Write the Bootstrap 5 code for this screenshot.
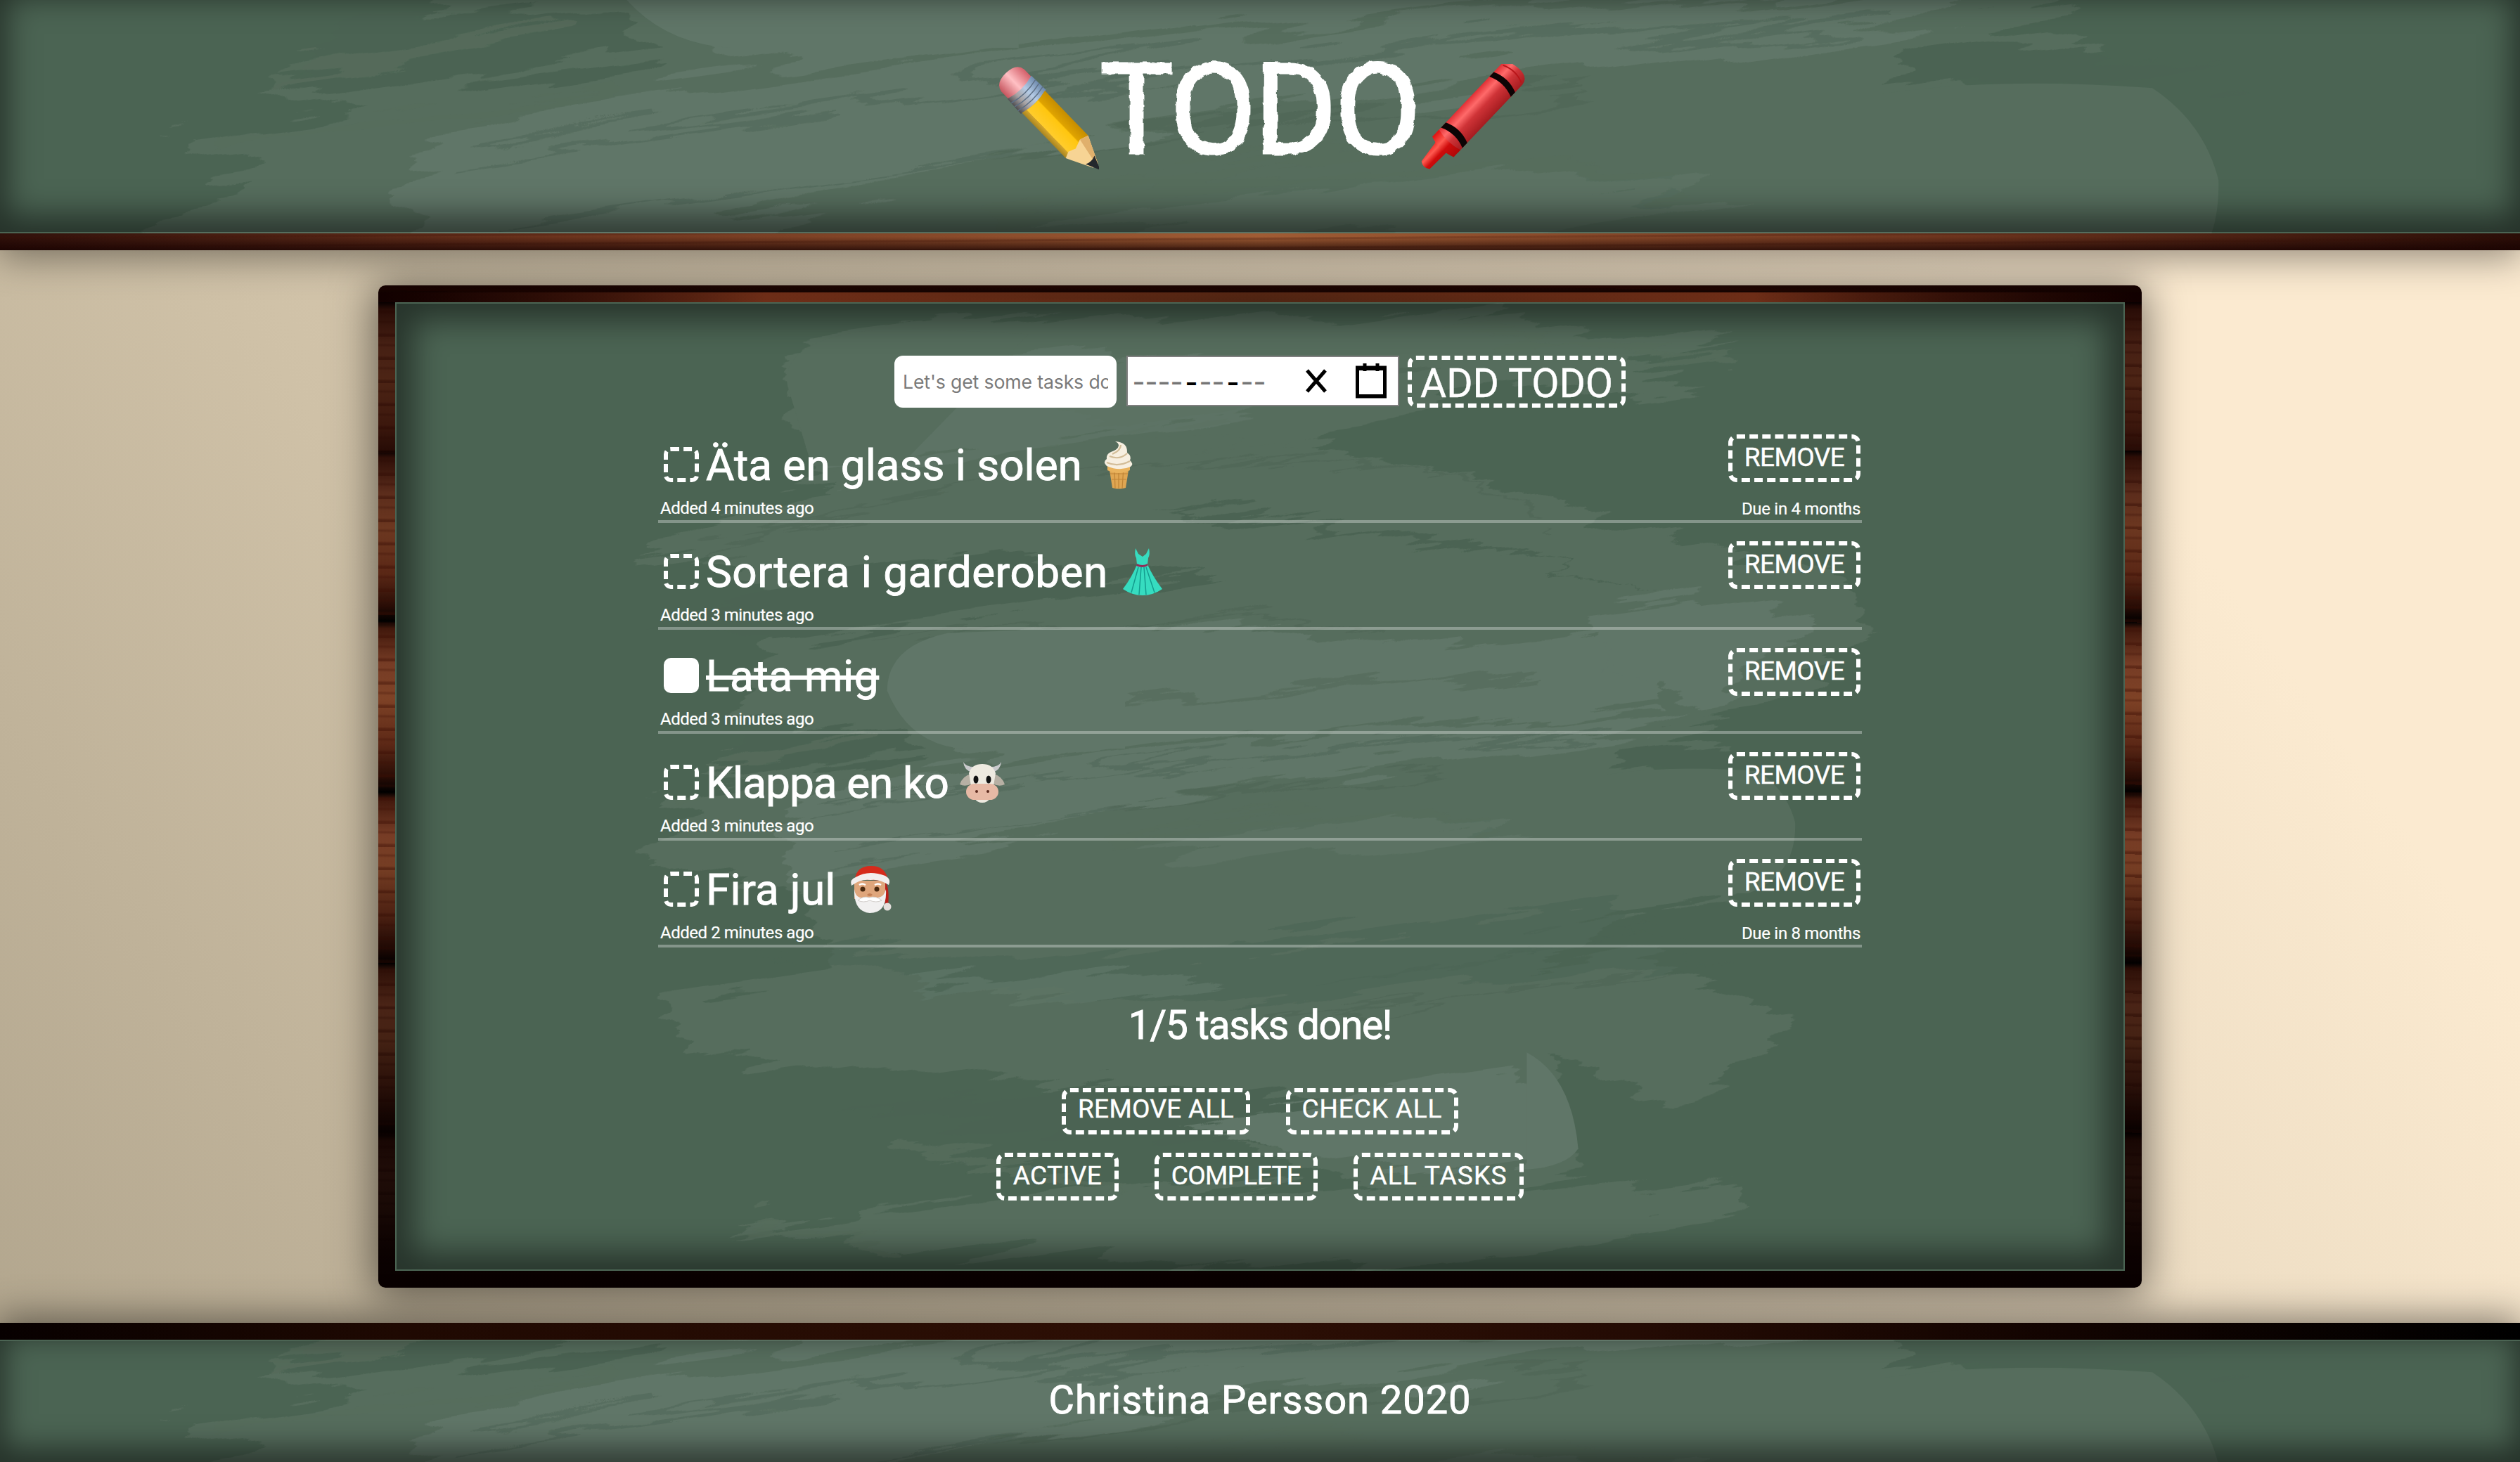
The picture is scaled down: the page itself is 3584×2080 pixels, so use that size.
<!DOCTYPE html>
<html lang="sv">
<head>
<meta charset="utf-8">
<meta name="viewport" content="width=device-width, initial-scale=1">
<title>Todo</title>
<link href="https://cdn.jsdelivr.net/npm/bootstrap@5.3.0/dist/css/bootstrap.min.css" rel="stylesheet">
<style>
  body { font-family: Roboto, "Open Sans", sans-serif; color: #fff; width: 3584px; height: 2080px; overflow: hidden;
    background: linear-gradient(54deg, #b0a48c 0, #cfc1a7 30%, #fbead0 80%); }
  .chalk { -webkit-text-stroke: .9px #fff; stroke-linejoin: round; paint-order: stroke; white-space: nowrap; }
  .board { position: relative; background: #4b6453; overflow: hidden; }
  .board > svg.smear { position: absolute; pointer-events: none; }
  .board > .shade { position: absolute; inset: 2px; pointer-events: none; }
  .board > .front { position: relative; z-index: 2; }

  .top-bar { height: 356px; box-shadow: 0 8px 50px 2px rgba(0,0,0,.42); position: relative; }
  .top-bar .board { height: 332px; }
  .top-bar .smear { left: -1416px; top: -1839px; width: 6417px; height: 3724px; }
  .top-bar .shade { box-shadow: inset 0 -14px 44px 10px rgba(0,0,0,.5); inset: 0 0 2px; }
  .wood-bar { height: 24px; }
  .wood-top { background:
      linear-gradient(rgba(0,0,0,0) 20%, rgba(20,0,0,.72)),
      repeating-linear-gradient(179.6deg, rgba(60,15,5,0) 0 5px, rgba(60,15,5,.22) 6px 8px, rgba(60,15,5,0) 9px 13px),
      linear-gradient(90deg, #30100a, #6b331d 22%, #a05c34 50%, #6b331d 78%, #2a0d07); }
  .wood-bottom { background: linear-gradient(90deg, #070000, #1f0902 16%, #2d0f05 45%, #240b04 65%, #120401 82%, #000); }
  .title { font-size: 180px; line-height: 200px; font-weight: 400; -webkit-text-stroke: 3px #fff; letter-spacing: -4px; filter: url(#wobble); margin: 3px 0 0; }

  .frame { width: 2508px; height: 1426px; margin-top: 50px; padding: 24px; border-radius: 10px;
    box-shadow: 0 6px 60px 6px rgba(0,0,0,.5);
    background:
      linear-gradient(90deg, rgba(16,0,0,.5) 0, rgba(16,0,0,0) 22%, rgba(16,0,0,0) 78%, rgba(16,0,0,.5)) 0 0 / 100% 24px no-repeat,
      linear-gradient(90deg, #140100, #6e2e18 22%, #84402190 50%, #6e2e18 78%, #140100) 0 10px / 100% 14px no-repeat,
      linear-gradient(rgba(16,0,0,.5) 0, rgba(16,0,0,.42) 15%, rgba(16,0,0,0) 30%, rgba(16,0,0,0) 55%, rgba(8,0,0,.6) 80%, rgba(8,0,0,.97) 97%),
      repeating-linear-gradient(1deg, rgba(60,14,4,.42) 0 3px, rgba(60,14,4,0) 6px 18px, rgba(60,14,4,.3) 21px, rgba(60,14,4,0) 24px 33px),
      repeating-linear-gradient(#000 0, #41180c 10px, #763c25 60px, #7e4226 110px, #5c2816 175px, #280c05 222px, #000 243px) 0 235px; }
  .frame .board { height: 1378px; }
  .frame .smear { left: -562px; top: -430px; width: 3584px; height: 2080px; }
  .frame .shade { box-shadow: inset 0 0 44px 24px rgba(0,0,0,.48); }

  .add-form { padding-top: 76px; }
  .text-entry { width: 316px; height: 74px; border: 0; border-radius: 12px; padding: 0 12px; font: 400 26.67px Inter, sans-serif; letter-spacing: -.15px; background: #fff; }
  .text-entry::placeholder { color: #7a7a7a; opacity: 1; }
  .date-entry { width: 388px; height: 72px; border: 2px solid #7f7f7f; background: #fff; margin-left: 14px; padding-right: 16px; padding-left: 8px; }
  .date-mask { font: 700 30px "Noto Sans", sans-serif; color: #757575; letter-spacing: 3px; line-height: 40px; padding-top: 2px; }
  .date-mask b { color: #000; margin: 0 2px 0 3px; }
  .dashed { border: 6px dashed #fff; border-radius: 12px; background: transparent; color: #fff; padding: 0; font-size: 37px; line-height: 40px; display: flex; align-items: center; justify-content: center; }
  .dashed.chalk { -webkit-text-stroke-width: .4px; }
  .add-btn { width: 310px; height: 74px; font-size: 57px; margin-left: 12px; padding-top: 5px; }

  .tasks { width: 1712px; margin-top: 12px; }
  .task { height: 152px; border-bottom: 4px solid rgba(255,255,255,.32); padding-top: 44px; }
  .task.done { height: 148px; padding-top: 40px; }
  .tick { width: 50px; height: 50px; border: 6px dashed #fff; border-radius: 10px; margin-left: 8px; }
  .done .tick { background: #fff; border-style: solid; }
  .task-text { font-size: 62px; line-height: 50px; padding-top: 2px; margin-left: 10px; }
  .task-row { height: 50px; }
  .done .task-text { text-decoration: line-through; text-decoration-thickness: 6px; }
  .task-row svg { overflow: visible; }
  .stamp { font-size: 24px; line-height: 32px; letter-spacing: -.46px; -webkit-text-stroke-width: .2px; }
  .added { padding: 21px 0 0 3px; }
  .due { padding-top: 22px; letter-spacing: -.3px; }
  .side { width: 190px; margin-top: -18px; padding-right: 2px; }
  .done .side { margin-top: -14px; }
  .remove { width: 188px; height: 68px; letter-spacing: -.55px; padding-bottom: 3px; }
  .tally { font-size: 57px; line-height: 60px; letter-spacing: -1.33px; margin-top: 81px; }
  .gap-btn { gap: 51px; }
  .row-a { margin-top: 59px; }
  .row-a .dashed { height: 66px; padding-bottom: 6px; }
  .row-b { margin-top: 26px; }
  .row-b .dashed { height: 68px; padding-bottom: 3px; }

  .foot-bar { margin-top: 50px; box-shadow: 0 -4px 50px 4px rgba(0,0,0,.46); position: relative; }
  .foot-bar .board { height: 174px; }
  .foot-bar .smear { left: -1416px; top: -1918px; width: 6417px; height: 3724px; }
  .foot-bar .shade { box-shadow: inset 0 -14px 40px 6px rgba(0,0,0,.5); inset: 2px 0 0; }
  .credit { font-size: 56px; line-height: 60px; letter-spacing: .95px; padding-top: 56px; }
</style>
<script src="https://cdn.jsdelivr.net/npm/bootstrap@5.3.0/dist/js/bootstrap.bundle.min.js"></script>
</head>
<body>
<svg width="0" height="0" class="position-absolute">
  <defs>
    <filter id="wobble" x="-5%" y="-5%" width="110%" height="110%">
      <feTurbulence type="fractalNoise" baseFrequency="0.1" numOctaves="1" seed="4" result="n"/>
      <feDisplacementMap in="SourceGraphic" in2="n" scale="7" xChannelSelector="R" yChannelSelector="G"/>
    </filter>
    <filter id="rough" filterUnits="userSpaceOnUse" x="300" y="100" width="980" height="780">
      <feTurbulence type="fractalNoise" baseFrequency="0.012 0.11" numOctaves="4" seed="9" result="n"/>
      <feDisplacementMap in="SourceGraphic" in2="n" scale="30" xChannelSelector="R" yChannelSelector="G"/>
    </filter>
    <symbol id="smear" viewBox="0 0 1568 910">
      <g transform="rotate(-8 784 490)"><g filter="url(#rough)"><g transform="rotate(8 784 490)">
        <g fill="#566d5d">
          <path d="M490 238Q492 208 540 204L760 194Q900 192 1085 214L1010 224 1064 244 920 240 860 262 780 290 610 305 545 322 505 290Z"/>
          <path d="M395 352Q470 300 640 278 820 268 925 300L1085 345 1140 352 1165 390 1120 430 1040 460 1075 468 1020 478 1060 500 1080 560Q1060 560 1010 568L950 600 1010 588 1115 636 1050 690 960 660 985 730 900 752 640 672 430 655 412 622 520 606 500 560 395 530 430 510 410 500 470 486 435 482 500 452 460 440 490 372 440 346Z"/>
          <path d="M458 765L560 752 700 738 900 742 1080 740 1088 756 960 780 800 790 640 780 520 772Z"/>
        </g>
        <g fill="#4b6453">
          <path d="M400 390Q500 350 640 345L760 358 640 376 500 400Z"/>
          <path d="M720 318Q860 316 1030 372L960 352 840 330Z"/>
          <path d="M470 455L560 452 575 468 510 478 440 480Z"/>
          <path d="M440 585Q600 600 760 590L1000 560 1060 600 900 612 760 625 600 618Z" opacity=".55"/>
          <path d="M520 690L700 672 860 690 800 712 640 706Z"/>
          <path d="M640 250L760 232 900 228 820 248 700 268Z" opacity=".5"/>
          <path d="M1010 466L1075 470 1120 474 1090 480 1000 480Z"/>
        </g>
        <g fill="#607668">
          <path d="M640 394L700 388 870 400 1000 396Q1036 412 1030 438L960 446 780 456 660 470 600 470 570 440Z"/>
          <path d="M486 512Q500 482 640 474L830 456 1055 444 1020 458 860 478 700 502 560 540 490 550Z"/>
          <path d="M505 262L560 232 700 222 860 238 760 262 620 280 520 296Z" opacity=".75"/>
          <path d="M985 380L1050 372 1130 385 1090 420 1060 440 1000 412Z"/>
          <path d="M740 702L860 680 940 664 965 700 960 724 880 728Z"/>
          <path d="M560 610L700 604 760 612 640 626Z" opacity=".7"/>
          <path d="M700 522L860 512 960 516 870 532 740 534Z" opacity=".6"/>
        </g>
        <g fill="none" stroke="#4b6453" stroke-width="2" opacity=".5">
          <path d="M440 345Q560 300 740 288T960 330M500 505Q700 470 1010 455M520 530Q700 500 900 480M540 400Q700 380 860 390M760 640Q920 620 1080 600M820 610Q940 600 1040 570"/>
        </g>
        <g fill="none" stroke="#566d5d" stroke-width="5" opacity=".8">
          <path d="M700 440Q800 420 960 425M690 520Q800 500 930 515M520 215Q560 230 620 240M560 712L700 740M470 760L560 778M900 205L1080 225M420 500L560 478M440 478L540 458"/>
        </g>
      </g></g></g>
      <path d="M1000 482Q1040 476 1094 480 1112 492 1117 512 1118 545 1088 556L1000 556Z" fill="#566d5d"/>
      <path d="M950 655Q978 670 982 715 975 726 950 728Z" fill="#607668"/>
      <path d="M552 430Q552 402 590 394L700 390 700 466 600 466Q566 464 552 430Z" fill="#607668"/>
      <path d="M490 240Q485 208 560 204L640 208 560 290 505 290Z" fill="#566d5d"/>
    </symbol>
  </defs>
</svg>

<header class="top-bar">
  <div class="board">
    <svg class="smear"><use href="#smear"/></svg>
    <div class="shade"></div>
    <div class="front d-flex justify-content-center h-100" style="padding-top:54px">
      <svg width="148" height="150" viewBox="0 0 148 150" style="margin-top:37px;margin-right:0">
        <defs>
          <linearGradient id="pk" x1="0" y1="0" x2="1" y2="0"><stop offset="0" stop-color="#c6555e"/><stop offset=".5" stop-color="#ffc0c4"/><stop offset="1" stop-color="#d4606a"/></linearGradient>
          <linearGradient id="mt" x1="0" y1="0" x2="1" y2="0"><stop offset="0" stop-color="#4b4a4e"/><stop offset=".3" stop-color="#a8a3a4"/><stop offset=".6" stop-color="#b4cbe6"/><stop offset="1" stop-color="#6d89ac"/></linearGradient>
          <linearGradient id="yl" x1="0" y1="0" x2="1" y2="0"><stop offset="0" stop-color="#a88420"/><stop offset=".17" stop-color="#d2a42c"/><stop offset=".18" stop-color="#ffcc2c"/><stop offset=".62" stop-color="#ffc60e"/><stop offset=".66" stop-color="#e0a400"/><stop offset="1" stop-color="#c68d00"/></linearGradient>
        </defs>
        <g transform="translate(24 22) rotate(-44) scale(1.03)">
          <path d="M-22 20V2Q-20-12 0-12T22 2V20Z" fill="url(#pk)"/>
          <path d="M-23 15Q0 22 23 15L24 43Q0 49-24 43Z" fill="url(#mt)"/>
          <path d="M-23 23Q0 29 23 23M-23 30Q0 36 23 30M-24 37Q0 43 24 37" fill="none" stroke="#5d6f85" stroke-width="1.400"/>
          <path d="M-22 43Q0 49 22 43V130L10 126-4 131-13 127-22 130Z" fill="url(#yl)"/>
          <path d="M-22 130L-13 126-3 130 10 125 22 129 5 166H-4Z" fill="#f7d494"/>
          <path d="M10 125L22 129 5 166H2Z" fill="#e0b06c"/>
          <path d="M-8 155Q0 159 9 155L1 175Z" fill="#24282c"/>
        </g>
      </svg>
      <h1 class="title chalk">TODO</h1>
      <svg width="148" height="150" viewBox="0 0 148 150" style="margin-top:37px;margin-left:4px">
        <defs><linearGradient id="rd" x1="0" y1="0" x2="1" y2="0"><stop offset="0" stop-color="#e02f34"/><stop offset=".28" stop-color="#ff6a6a"/><stop offset=".55" stop-color="#cf3337"/><stop offset="1" stop-color="#a51c20"/></linearGradient>
        <linearGradient id="rt" x1="0" y1="0" x2="1" y2="0"><stop offset="0" stop-color="#e01010"/><stop offset=".35" stop-color="#ff5a50"/><stop offset=".6" stop-color="#cf0c0c"/><stop offset="1" stop-color="#b00808"/></linearGradient></defs>
        <g transform="translate(129 15) rotate(43.5)">
          <path d="M-18 134L-6 134H12L18 132 9 144 8 178Q0 184-8 178L-12 146Z" fill="url(#rt)"/>
          <path d="M-21 0Q-20-12 0-13T21 0V134Q0 144-21 134Z" fill="url(#rd)"/>
          <path d="M-21 128Q0 134 21 128V142Q0 150-21 142Z" fill="url(#rt)"/>
          <path d="M-21 15Q0 6 21 15V24Q0 15-21 24ZM-21 114Q0 105 21 114V124Q0 115-21 124Z" fill="#0c0405"/>
          <path d="M-18-1Q0-9 18-1" fill="none" stroke="#b81519" stroke-width="2"/>
        </g>
      </svg>
    </div>
  </div>
  <div class="wood-bar wood-top"></div>
</header>

<main class="frame mx-auto">
  <div class="board">
    <svg class="smear"><use href="#smear"/></svg>
    <div class="shade"></div>
    <div class="front d-flex flex-column align-items-center">
      <form class="add-form d-flex align-items-start">
        <input class="text-entry" type="text" placeholder="Let's get some tasks done!">
        <div class="date-entry d-flex align-items-center">
          <span class="date-mask">––––<b>–</b>––<b>–</b>––</span>
          <svg class="ms-auto" width="30" height="34" viewBox="0 0 30 34"><path d="M2 2L28 32M28 2L2 32" stroke="#000" stroke-width="5"/></svg>
          <svg style="margin-left:41px" width="44" height="50" viewBox="0 0 44 50"><path d="M2.500 6H41.500V47H2.500ZM0 7.500H44M0 46.500H44M13 0V11M31 0V11" fill="none" stroke="#000" stroke-width="5"/></svg>
        </div>
        <button type="button" class="dashed chalk add-btn">ADD TODO</button>
      </form>

      <ul class="tasks list-unstyled mb-0">
        <li class="task d-flex justify-content-between">
          <div>
            <label class="task-row d-flex align-items-center"><span class="tick"></span><span class="task-text chalk">Äta en glass i solen</span>
              <svg width="42" height="68" viewBox="0 0 42 68" style="margin-left:31px">
                <path d="M7 36H36L31 67Q21 70 12 67Z" fill="#e0a652"/><path d="M15 37L16 68M21 37V68M28 37L26 68M9 47H34M11 55H32" stroke="#bf8436" stroke-width="1.2"/><path d="M5 33H37V42Q21 50 5 42Z" fill="#e9b25c"/>
                <path d="M16 1Q34 2 33 17 40 22 37 28 43 33 38 37 22 44 4 36-2 30 4 26 3 19 10 16 20 13 21 7 21 3 16 1Z" fill="#f7efe0"/>
                <path d="M8 22Q22 28 33 18M4 31Q20 38 37 29M24 6Q24 14 12 19" fill="none" stroke="#d3bd98" stroke-width="2.200"/></svg>
            </label>
            <div class="stamp chalk added">Added 4 minutes ago</div>
          </div>
          <div class="side d-flex flex-column align-items-end"><button class="dashed chalk remove">REMOVE</button><span class="stamp chalk due">Due in 4 months</span></div>
        </li>
        <li class="task d-flex justify-content-between">
          <div>
            <label class="task-row d-flex align-items-center"><span class="tick"></span><span class="task-text chalk" style="letter-spacing:.5px">Sortera i garderoben</span>
              <svg width="58" height="68" viewBox="0 0 58 68" style="margin-left:20px">
                <path d="M19 1Q17 10 20 15L21 24Q14 42 1 59 14 68 29 68T57 59Q44 42 36 24L37 15Q40 10 38 1L34 9 29 13 23 9Z" fill="#36dcc0"/>
                <path d="M23 28L13 64M27 28L24 67M31 28L34 67M34 28L46 64" stroke="#149c8e" stroke-width="1.500"/><path d="M21 23Q29 27 36 23V26Q29 30 20 26Z" fill="#8f2d58"/></svg>
            </label>
            <div class="stamp chalk added">Added 3 minutes ago</div>
          </div>
          <div class="side"><button class="dashed chalk remove">REMOVE</button></div>
        </li>
        <li class="task done d-flex justify-content-between">
          <div>
            <label class="task-row d-flex align-items-center"><span class="tick"></span><span class="task-text chalk" style="letter-spacing:.7px">Lata mig</span></label>
            <div class="stamp chalk added">Added 3 minutes ago</div>
          </div>
          <div class="side"><button class="dashed chalk remove">REMOVE</button></div>
        </li>
        <li class="task d-flex justify-content-between">
          <div>
            <label class="task-row d-flex align-items-center"><span class="tick"></span><span class="task-text chalk" style="letter-spacing:-.9px">Klappa en ko</span>
              <svg width="64" height="58" viewBox="0 0 64 58" style="margin-left:16px">
                <path d="M18 15Q6 12 5 0 9 8 24 7ZM46 15Q58 12 59 0 55 8 40 7Z" fill="#c9c9cc"/>
                <path d="M16 17Q4 20 0 32 8 36 17 31ZM48 17Q60 20 64 32 56 36 47 31Z" fill="#b7b0a4"/>
                <path d="M13 16Q17 3 32 3T51 16L48 34Q46 58 32 58T16 34Z" fill="#eeeae0"/>
                <rect x="9" y="31" width="46" height="23" rx="12" fill="#e7b9a5"/>
                <ellipse cx="23" cy="25" rx="3.500" ry="5.500" fill="#111"/><ellipse cx="41" cy="25" rx="3.500" ry="5.500" fill="#111"/><circle cx="24" cy="42" r="2" fill="#5b2a1e"/><circle cx="40" cy="42" r="2" fill="#5b2a1e"/></svg>
            </label>
            <div class="stamp chalk added">Added 3 minutes ago</div>
          </div>
          <div class="side"><button class="dashed chalk remove">REMOVE</button></div>
        </li>
        <li class="task d-flex justify-content-between">
          <div>
            <label class="task-row d-flex align-items-center"><span class="tick"></span><span class="task-text chalk" style="letter-spacing:.3px">Fira jul</span>
              <svg width="60" height="68" viewBox="0 0 60 68" style="margin-left:21px">
                <path d="M45 22Q56 24 53 58L49 58 47 30Z" fill="#b8201a"/><path d="M5 22H49V48H5Z" fill="#dfa67c"/>
                <path d="M6 20Q8 1 29 1T53 22Z" fill="#d62b1c"/><path d="M5 34Q7 48 18 46L38 46Q47 46 50 34 52 68 27 68 4 66 5 34Z" fill="#f1f0f0"/>
                <path d="M1 29Q-2 20 7 17 25 6 49 15 58 20 54 28 40 19 28 21 14 19 1 29Z" fill="#f3efef"/>
                <path d="M12 28Q16 25 21 28M34 28Q39 25 43 28" stroke="#fff" stroke-width="2.500" fill="none"/>
                <circle cx="17" cy="34" r="3.500" fill="#4a2a10"/><circle cx="37" cy="34" r="3.500" fill="#4a2a10"/><path d="M23 42Q27 38 31 42Q27 46 23 42Z" fill="#c37f55"/>
                <path d="M10 50Q18 43 26 46 36 43 44 50 36 54 27 50 18 54 10 50Z" fill="#fff" stroke="#d1cdca"/>
                <circle cx="52" cy="59" r="5.500" fill="#e4dfdc"/></svg>
            </label>
            <div class="stamp chalk added">Added 2 minutes ago</div>
          </div>
          <div class="side d-flex flex-column align-items-end"><button class="dashed chalk remove">REMOVE</button><span class="stamp chalk due">Due in 8 months</span></div>
        </li>
      </ul>

      <div class="tally chalk">1/5 tasks done!</div>
      <div class="row-a d-flex gap-btn">
        <button class="dashed chalk" style="width:268px;letter-spacing:.3px">REMOVE ALL</button>
        <button class="dashed chalk" style="width:245px;letter-spacing:.87px">CHECK ALL</button>
      </div>
      <div class="row-b d-flex gap-btn">
        <button class="dashed chalk" style="width:174px;letter-spacing:.36px">ACTIVE</button>
        <button class="dashed chalk" style="width:232px;letter-spacing:-.65px">COMPLETE</button>
        <button class="dashed chalk" style="width:242px;letter-spacing:1.2px">ALL TASKS</button>
      </div>
    </div>
  </div>
</main>

<footer class="foot-bar">
  <div class="wood-bar wood-bottom"></div>
  <div class="board">
    <svg class="smear"><use href="#smear"/></svg>
    <div class="shade"></div>
    <div class="front credit chalk text-center">Christina Persson 2020</div>
  </div>
</footer>
</body>
</html>
